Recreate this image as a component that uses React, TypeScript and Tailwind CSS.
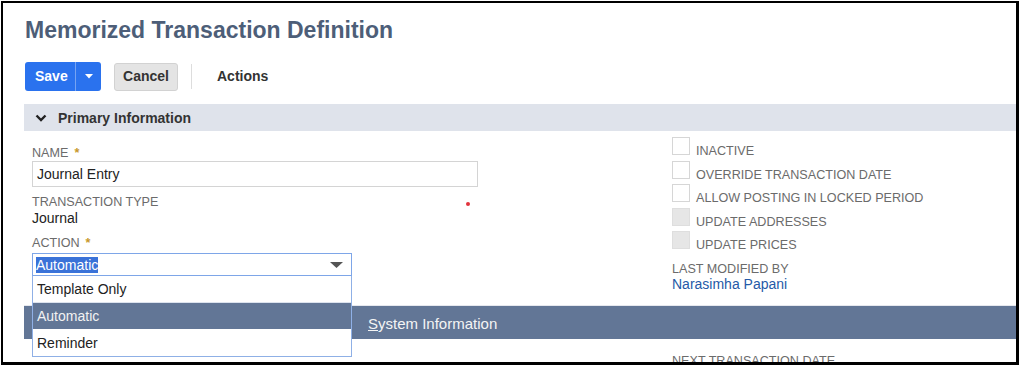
import React from 'react';

const labelCls = "text-[12.6px] leading-[14px] uppercase text-[#6b6b6b]";

function Req() {
  return <span className="ml-[6px] text-[#c8982c] font-bold">*</span>;
}

function CheckRow({ label, disabled }: { label: string; disabled?: boolean }) {
  return (
    <div className="flex items-end h-[18px]">
      <div
        className={
          disabled
            ? "w-[18px] h-[18px] bg-[#e6e6e6] border border-[#dedede]"
            : "w-[18px] h-[18px] bg-white border border-[#d6d6d6]"
        }
      />
      <span className={labelCls + " ml-[6px] -mb-[3px]"}>{label}</span>
    </div>
  );
}

export default function App() {
  return (
    <div className="w-[1024px] h-[368px] bg-white font-['Liberation_Sans',Arial,sans-serif] overflow-hidden">
      <div className="ml-px mt-px w-[1018px] h-[364px] border-black border-l-2 border-t-2 border-r-[3px] border-b-[3px] overflow-hidden bg-white">
        <div className="pl-[21px] w-[1100px]">
          {/* title */}
          <h1 className="ml-px mt-[13px] text-[23px] leading-[28px] font-bold text-[#4d5e78]">
            Memorized Transaction Definition
          </h1>

          {/* toolbar */}
          <div className="ml-px mt-[18px] flex items-center h-[29px]">
            <div className="flex h-[29px] rounded-[3px] bg-[#2a72ee] text-white">
              <button className="w-[50px] pl-[10px] text-left text-[14px] font-bold">Save</button>
              <div className="w-px bg-[#76a3f2]" />
              <button className="w-[25px] flex items-center justify-center">
                <svg width="8" height="5" viewBox="0 0 8 5">
                  <path d="M0 0 L8 0 L4 4.5 Z" fill="#fff" />
                </svg>
              </button>
            </div>
            <button className="ml-[13px] h-[28px] w-[64px] rounded-[3px] bg-[#e4e4e4] border border-[#d2d2d2] text-[14px] font-bold text-[#333]">
              Cancel
            </button>
            <div className="ml-[13px] w-px h-[25px] bg-[#dddddd]" />
            <span className="ml-[25px] text-[14px] font-bold text-[#333]">Actions</span>
          </div>

          {/* primary information */}
          <div className="mt-[13px] h-[27px] bg-[#dfe3eb] flex items-center">
            <svg className="ml-[11px]" width="12" height="8" viewBox="0 0 12 8">
              <path d="M1.5 1.5 L6 6 L10.5 1.5" fill="none" stroke="#222" strokeWidth="2.4" />
            </svg>
            <span className="ml-[11px] text-[14px] leading-[16px] font-bold text-[#333]">Primary Information</span>
          </div>

          <div className="h-[174px] flex">
            {/* left column */}
            <div className="w-[648px] pl-2">
              <div className={labelCls + " mt-[15px]"}>
                Name<Req />
              </div>
              <div className="mt-px w-[446px] h-[26px] border border-[#d4d4d4] flex items-center pl-[4px]">
                <span className="text-[14px] leading-[16px] text-[#222]">Journal Entry</span>
              </div>
              <div className="mt-[8px] w-[438px] flex justify-between">
                <span className={labelCls}>Transaction Type</span>
                <span className="mt-[7px] w-[4px] h-[4px] rounded-full bg-[#e2323c]" />
              </div>
              <div className="mt-px text-[14px] leading-[16px] text-[#222]">Journal</div>
              <div className={labelCls + " mt-[10px]"}>
                Action<Req />
              </div>
              <div className="relative mt-[3px] w-[320px]">
                <div className="h-[23px] border border-[#7ea6e8] flex items-center pl-[3px] pr-[8px] justify-between bg-white">
                  <span className="text-[14px] leading-[16px] bg-[#3a72d8] text-white">Automatic</span>
                  <svg width="13" height="6" viewBox="0 0 13 6">
                    <path d="M0 0 L13 0 L6.5 6 Z" fill="#555" />
                  </svg>
                </div>
                <div className="absolute z-10 left-0 top-full w-full bg-white border border-t-0 border-[#8fb0e6] text-[14px] leading-[16px]">
                  <div className="h-[26px] flex items-center pl-[4px] text-[#222]">Template Only</div>
                  <div className="h-[27px] border-t border-[#dde3ee] flex items-center pl-[4px] bg-[#627696] text-[#f2f2f2]">
                    Automatic
                  </div>
                  <div className="h-[27px] flex items-center pl-[4px] text-[#222]">Reminder</div>
                </div>
              </div>
            </div>

            {/* right column */}
            <div className="flex flex-col">
              <div className="mt-[6px] flex flex-col gap-[5.6px]">
                <CheckRow label="Inactive" />
                <CheckRow label="Override Transaction Date" />
                <CheckRow label="Allow Posting in Locked Period" />
                <CheckRow label="Update Addresses" disabled />
                <CheckRow label="Update Prices" disabled />
              </div>
              <div className={labelCls + " mt-[12.6px]"}>Last Modified By</div>
              <a className="text-[14px] leading-[16px] text-[#255aa8]">Narasimha Papani</a>
            </div>
          </div>

          {/* system information */}
          <div className="h-[34px] border-t border-[#e6e8ee] bg-[#627696] flex items-center pl-[344px] pt-[2px]">
            <span className="text-[15px] leading-[16px] text-[#f4f4f4]">
              <span className="underline">S</span>ystem Information
            </span>
          </div>

          <div className="mt-[15px] flex">
            <div className="w-[648px] pl-[23px]">
              <span className={labelCls}>
                Next Date<Req />
              </span>
            </div>
            <span className={labelCls}>Next Transaction Date</span>
          </div>
        </div>
      </div>
    </div>
  );
}
